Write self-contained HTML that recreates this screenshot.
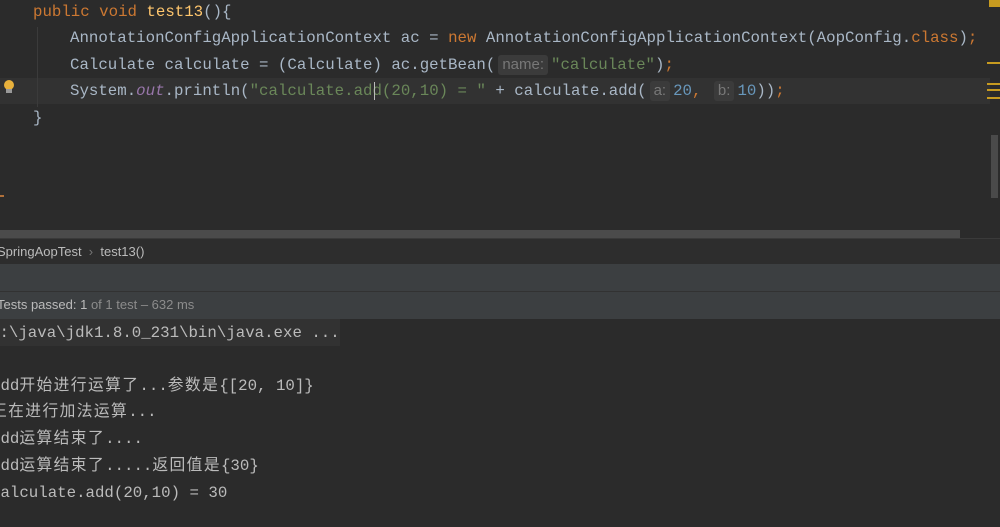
<!DOCTYPE html>
<html><head><meta charset="utf-8"><style>
*{margin:0;padding:0;box-sizing:border-box}
body{width:1000px;height:527px;overflow:hidden;background:#2b2b2b;position:relative;font-family:"Liberation Mono","Noto Sans CJK SC",monospace;}
.l{position:absolute;white-space:pre;font-size:15.75px;color:#a9b7c6;line-height:20px}
.k{color:#cc7832}.s{color:#6a8759}.f{color:#ffc66d}.o{color:#9876aa;font-style:italic}.n{color:#6897bb}
.h{display:inline-block;background:#3b3b3b;color:#787878;font-family:"Liberation Sans",sans-serif;font-size:15px;border-radius:3px;padding:0 4px;line-height:20px;margin:0 3px}
.ui{position:absolute;font-family:"Liberation Sans",sans-serif;font-size:13px;white-space:pre}
.c{position:absolute;white-space:pre;font-size:15.75px;color:#bbbbbb;line-height:20px;font-family:"Liberation Mono","Noto Sans CJK SC",monospace}
.z{letter-spacing:1.4px}
</style></head><body>
<div style="position:absolute;left:0;top:78px;width:990px;height:26px;background:#323232"></div>
<div style="position:absolute;left:37px;top:27px;width:1px;height:80px;background:#3b3b3b"></div>
<div class="l" style="left:33px;top:2px"><span class="k">public void </span><span class="f">test13</span>(){</div>
<div class="l" style="left:70px;top:28px">AnnotationConfigApplicationContext ac = <span class="k">new </span>AnnotationConfigApplicationContext(AopConfig.<span class="k">class</span>)<span class="k">;</span></div>
<div class="l" style="left:70px;top:55px">Calculate calculate = (Calculate) ac.getBean(<span class="h">name:</span><span class="s">"calculate"</span>)<span class="k">;</span></div>
<div class="l" style="left:70px;top:81px">System.<span class="o">out</span>.println(<span class="s">"calculate.add(20,10) = "</span> + calculate.add(<span class="h">a:</span><span class="n">20</span><span class="k">, </span><span class="h">b:</span><span class="n">10</span>))<span class="k">;</span></div>
<div style="position:absolute;left:374px;top:82px;width:1px;height:18px;background:#bbb"></div>
<div class="l" style="left:33px;top:108px">}</div>
<div style="position:absolute;left:4px;top:80px;width:10px;height:10px;border-radius:50%;background:#e8b13c"></div>
<div style="position:absolute;left:6px;top:89px;width:6px;height:4px;background:#999"></div>
<div style="position:absolute;left:0;top:195px;width:4px;height:2px;background:#b0703a"></div>
<div style="position:absolute;left:989px;top:0;width:11px;height:7px;background:#c79b20"></div>
<div style="position:absolute;left:987px;top:62px;width:13px;height:2px;background:#c79b20"></div>
<div style="position:absolute;left:987px;top:83px;width:13px;height:2px;background:#c79b20"></div>
<div style="position:absolute;left:987px;top:89px;width:13px;height:2px;background:#c79b20"></div>
<div style="position:absolute;left:987px;top:97px;width:13px;height:2px;background:#c79b20"></div>
<div style="position:absolute;left:991px;top:135px;width:7px;height:63px;background:#4a4a4a"></div>
<div style="position:absolute;left:0;top:230px;width:960px;height:8px;background:#4b4b4b"></div>
<div style="position:absolute;left:0;top:238px;width:1000px;height:26px;background:#2d2d2d;border-top:1px solid #3a3a3a"></div>
<div class="ui" style="left:-3px;top:244px;color:#bbb">SpringAopTest <span style="color:#777"> › </span> test13()</div>
<div style="position:absolute;left:0;top:264px;width:1000px;height:27px;background:#3c3f41"></div>
<div style="position:absolute;left:0;top:291px;width:1000px;height:28px;background:#3c3f41;border-top:1px solid #323232"></div>
<div class="ui" style="left:-3px;top:297px;color:#bbb">Tests passed: 1 <span style="color:#8c8c8c">of 1 test – 632 ms</span></div>
<div style="position:absolute;left:0;top:319px;width:340px;height:27px;background:#323232"></div>
<div class="c" style="left:-10px;top:323px">C:\java\jdk1.8.0_231\bin\java.exe ...</div>
<div class="c" style="left:-9px;top:376px">add<span class="z">开始进行运算了</span>...<span class="z">参数是</span>{[20, 10]}</div>
<div class="c" style="left:-9px;top:402px"><span class="z">正在进行加法运算</span>...</div>
<div class="c" style="left:-9px;top:429px">add<span class="z">运算结束了</span>....</div>
<div class="c" style="left:-9px;top:456px">add<span class="z">运算结束了</span>.....<span class="z">返回值是</span>{30}</div>
<div class="c" style="left:-9px;top:483px">calculate.add(20,10) = 30</div>
</body></html>
